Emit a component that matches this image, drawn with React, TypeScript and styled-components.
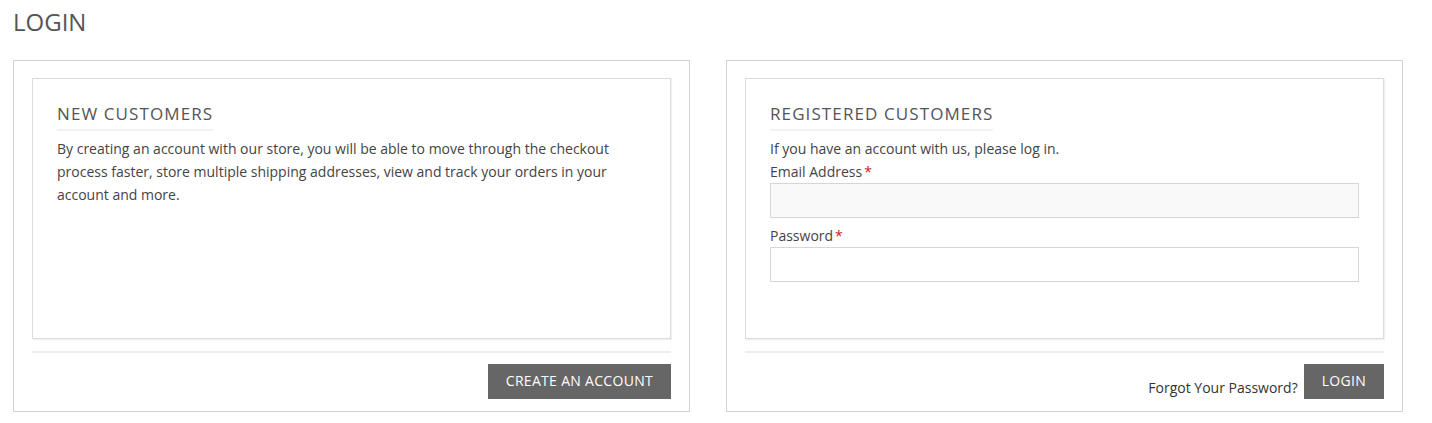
import React from "react";
import styled, { createGlobalStyle } from "styled-components";

const Global = createGlobalStyle`
  html, body { margin: 0; padding: 0; background: #fff; }
  body { font-family: "Open Sans", "Liberation Sans", Arial, sans-serif; color: #444; }
  * { box-sizing: border-box; }
`;

const Page = styled.div`
  padding: 0 29px 0 13px;
  width: 1432px;
`;

const Title = styled.h1`
  margin: 0;
  height: 60px;
  padding-top: 5px;
  font-size: 24px;
  font-weight: 400;
  line-height: 34px;
  color: #555;
  text-transform: uppercase;
`;

const Columns = styled.div`
  display: grid;
  grid-template-columns: 677px 677px;
  column-gap: 36px;
`;

const Outer = styled.div`
  border: 1px solid #d3d3d3;
  padding: 17px 18px 12px;
`;

const Inner = styled.div`
  border: 1px solid #dcdcdc;
  box-shadow: 1px 1px 1px #f0f0f0;
  height: 261px;
  padding: 20px 24px 0;
`;

const Heading = styled.h2`
  display: inline-block;
  margin: 0 0 6px;
  font-size: 17px;
  font-weight: 400;
  letter-spacing: 1.1px;
  line-height: 30px;
  color: #555;
  text-transform: uppercase;
  border-bottom: 2px solid #f2f2f2;
`;

const Text = styled.p`
  margin: 0;
  font-size: 14px;
  line-height: 23px;
  color: #444;
`;

const Label = styled.label`
  display: block;
  font-size: 14px;
  line-height: 23px;
  color: #444;
`;

const Req = styled.span`
  color: #c22;
  margin-left: 2px;
`;

const Input = styled.input<{ $filled?: boolean }>`
  display: block;
  width: 100%;
  height: 35px;
  border: 1px solid #d6d6d6;
  background: ${(p) => (p.$filled ? "#f9f9f9" : "#fff")};
  margin: 0 0 6px;
  padding: 0 10px;
  font-family: inherit;
  font-size: 14px;
  outline: none;
`;

const Divider = styled.div`
  height: 2px;
  background: #eeeeee;
  margin: 12px 0 11px;
`;

const Footer = styled.div`
  display: flex;
  justify-content: flex-end;
  align-items: flex-end;
  gap: 6px;
`;

const Forgot = styled.a`
  font-size: 14px;
  line-height: 23px;
  color: #333;
  text-decoration: none;
`;

const Button = styled.button`
  height: 35px;
  padding: 0 18px 2px;
  border: none;
  background: #666;
  color: #fff;
  font-family: inherit;
  font-size: 14px;
  letter-spacing: 0.3px;
  text-transform: uppercase;
  line-height: 33px;
  cursor: pointer;
`;

export default function App() {
  return (
    <>
      <Global />
      <Page>
        <Title>Login</Title>
        <Columns>
          <Outer>
            <Inner>
              <Heading>New Customers</Heading>
              <Text>
                By creating an account with our store, you will be able to move through the checkout
                process faster, store multiple shipping addresses, view and track your orders in your
                account and more.
              </Text>
            </Inner>
            <Divider />
            <Footer>
              <Button>Create an Account</Button>
            </Footer>
          </Outer>
          <Outer>
            <Inner>
              <Heading>Registered Customers</Heading>
              <Text>If you have an account with us, please log in.</Text>
              <Label>
                Email Address<Req>*</Req>
              </Label>
              <Input $filled type="email" />
              <Label>
                Password<Req>*</Req>
              </Label>
              <Input type="password" />
            </Inner>
            <Divider />
            <Footer>
              <Forgot href="#">Forgot Your Password?</Forgot>
              <Button>Login</Button>
            </Footer>
          </Outer>
        </Columns>
      </Page>
    </>
  );
}
